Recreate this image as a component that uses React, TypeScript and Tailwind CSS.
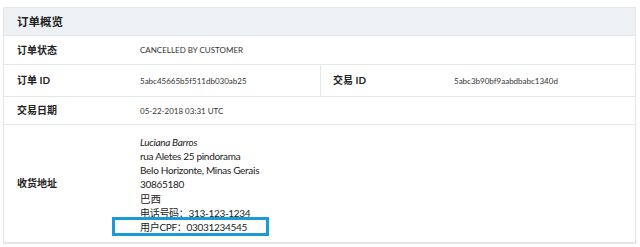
const FONT = "font-['Lato','Noto_Sans_CJK_SC',sans-serif]";

function Label({ children }: { children: React.ReactNode }) {
  return <div className="text-[10px] font-bold text-[#222]">{children}</div>;
}

function Value({ children }: { children: React.ReactNode }) {
  return <div className="text-[8px] text-[#333]">{children}</div>;
}

export default function App() {
  return (
    <div className={`${FONT} w-[640px] h-[247px] bg-white pt-[7px] pl-[3px]`}>
      <div className="w-[633px] border border-[#e3e7ea] border-b-2">
        <div className="h-[28px] bg-[#eef1f4] flex items-center pl-[13px] border-b border-[#e3e7ea]">
          <span className="text-[11.5px] font-bold text-[#222]">订单概览</span>
        </div>

        <div className="h-[29px] flex items-center border-b border-[#e3e7ea]">
          <div className="w-[136px] pl-[13px]">
            <Label>订单状态</Label>
          </div>
          <Value>CANCELLED BY CUSTOMER</Value>
        </div>

        <div className="h-[32px] flex border-b border-[#e3e7ea]">
          <div className="w-[317px] flex items-center border-r border-[#e3e7ea]">
            <div className="w-[136px] pl-[13px]">
              <Label>订单 ID</Label>
            </div>
            <Value>5abc45665b5f511db030ab25</Value>
          </div>
          <div className="flex-1 flex items-center">
            <div className="w-[133px] pl-[12px]">
              <Label>交易 ID</Label>
            </div>
            <Value>5abc3b90bf9aabdbabc1340d</Value>
          </div>
        </div>

        <div className="h-[28px] flex items-center border-b border-[#e3e7ea]">
          <div className="w-[136px] pl-[13px]">
            <Label>交易日期</Label>
          </div>
          <Value>05-22-2018 03:31 UTC</Value>
        </div>

        <div className="h-[117px] flex items-center">
          <div className="w-[136px] pl-[13px]">
            <Label>收货地址</Label>
          </div>
          <div className="text-[10px] tracking-[-0.3px] leading-[14.2px] text-[#222] pt-[2px]">
            <div className="italic">Luciana Barros</div>
            <div>rua Aletes 25 pindorama</div>
            <div>Belo Horizonte, Minas Gerais</div>
            <div>30865180</div>
            <div className="tracking-normal text-[10.5px]">巴西</div>
            <div>电话号码：313-123-1234</div>
            <div className="relative">
              用户CPF：03031234545
              <span className="absolute left-[-28px] top-[-3px] w-[157px] h-[19px] border-[3px] border-[#1a9ad9]" />
            </div>
          </div>
        </div>
      </div>
    </div>
  );
}
